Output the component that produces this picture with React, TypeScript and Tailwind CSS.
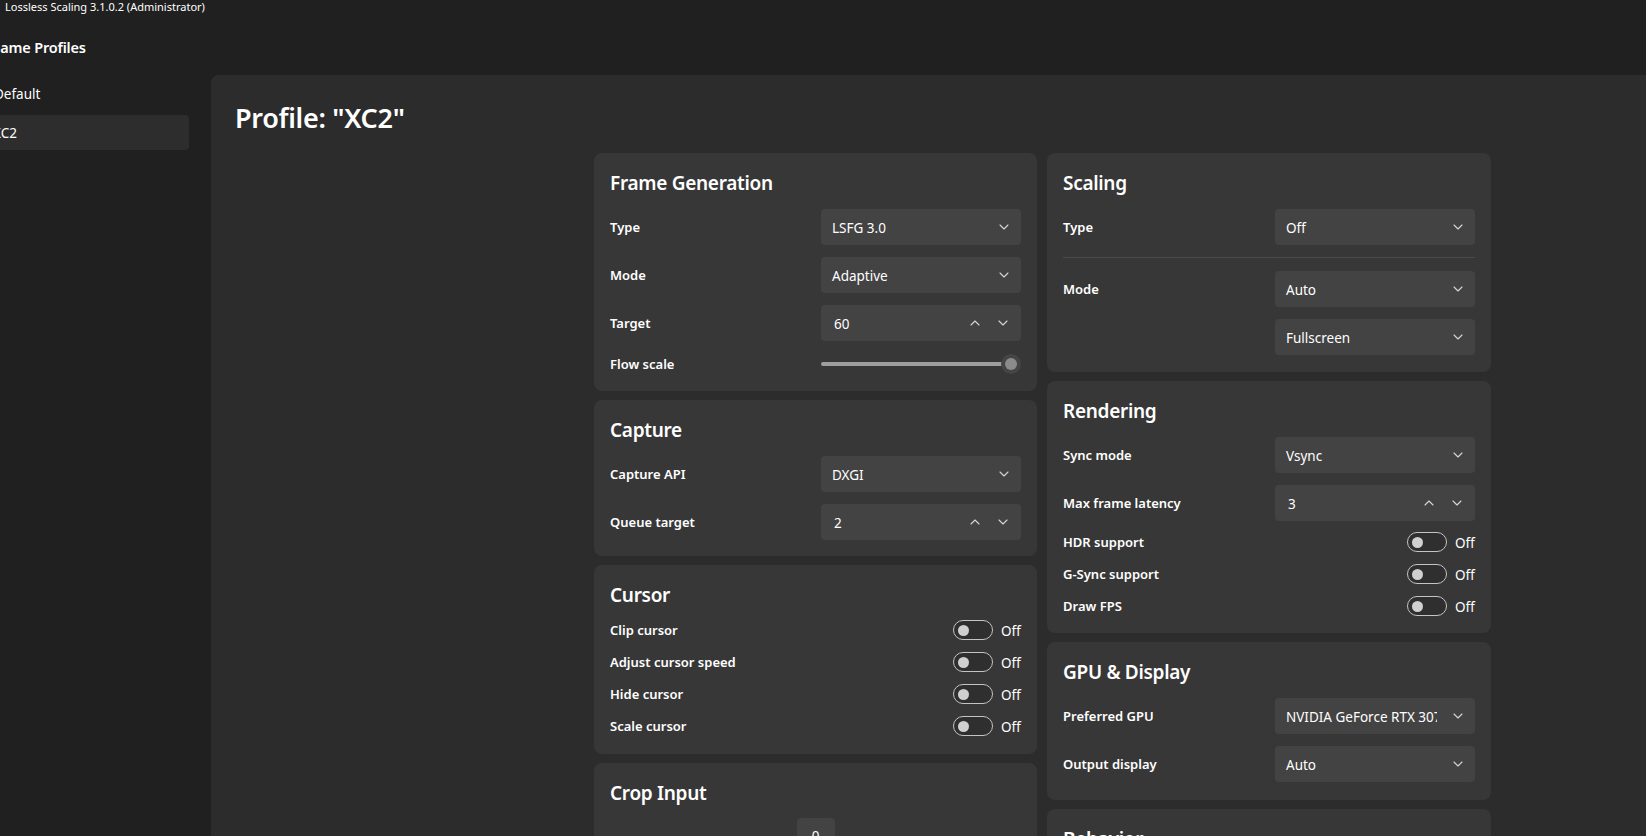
import React from "react";

function Chevron({ up = false, className = "" }: { up?: boolean; className?: string }) {
  return (
    <svg width="12" height="12" viewBox="0 0 12 12" className={className} fill="none">
      <path
        d={up ? "M2 8 L6 4 L10 8" : "M2 4 L6 8 L10 4"}
        stroke="#d6d6d6"
        strokeWidth="1.1"
        strokeLinecap="round"
        strokeLinejoin="round"
      />
    </svg>
  );
}

function Dropdown({ value, clip = false }: { value: string; clip?: boolean }) {
  return (
    <div className="w-[200px] h-[36px] rounded-[4px] bg-[#434343] flex items-center justify-between pl-[11px] pr-[11px] text-[13.5px] text-white">
      {clip ? (
        <span className="w-[151px] overflow-hidden whitespace-nowrap pt-[2px]">{value}</span>
      ) : (
        <span className="whitespace-nowrap pt-[2px]">{value}</span>
      )}
      <Chevron />
    </div>
  );
}

function NumberBox({ value }: { value: string }) {
  return (
    <div className="w-[200px] h-[36px] rounded-[4px] bg-[#434343] flex items-center justify-between pl-[13px] pr-[4px] text-[13.5px] text-white">
      <span className="pt-[2px]">{value}</span>
      <div className="flex items-center">
        <div className="w-[28px] h-[28px] flex items-center justify-center">
          <Chevron up />
        </div>
        <div className="w-[28px] h-[28px] flex items-center justify-center">
          <Chevron />
        </div>
      </div>
    </div>
  );
}

function Label({ children }: { children: React.ReactNode }) {
  return <span className="block pt-[2px] text-[13px] font-semibold text-white whitespace-nowrap">{children}</span>;
}

function Row({ label, children, className = "" }: { label?: string; children: React.ReactNode; className?: string }) {
  return (
    <div className={"flex items-center justify-between h-[36px] " + className}>
      {label ? <Label>{label}</Label> : <span />}
      {children}
    </div>
  );
}

function ToggleRow({ label }: { label: string }) {
  return (
    <div className="flex items-center justify-between h-[32px]">
      <Label>{label}</Label>
      <div className="flex items-center gap-[8px]">
        <div className="w-[40px] h-[20px] rounded-full border border-[#c4c4c4] bg-[#2f2f2f] flex items-center pl-[4px]">
          <div className="w-[11px] h-[11px] rounded-full bg-[#d0d0d0]" />
        </div>
        <span className="block pt-[2px] text-[13.5px] text-white w-[20px]">Off</span>
      </div>
    </div>
  );
}

function Card({ title, h, children }: { title: string; h: string; children?: React.ReactNode }) {
  return (
    <div className={"rounded-[8px] bg-[#373737] px-[16px] pt-[16px] shrink-0 " + h}>
      <div className="text-[19px] tracking-[-0.3px] font-semibold leading-[28px] text-white">{title}</div>
      {children}
    </div>
  );
}

export default function App() {
  return (
    <div className="w-[1646px] h-[836px] overflow-hidden bg-[#202020] flex flex-col font-['Noto_Sans',sans-serif] text-white">
      <div className="h-[14px] leading-[14px] pl-[5px] text-[11px] text-white whitespace-nowrap">
        Lossless Scaling 3.1.0.2 (Administrator)
      </div>
      <div className="flex flex-1 min-h-0">
        <aside className="w-[211px] shrink-0 flex flex-col overflow-hidden">
          <div className="mt-[21px] ml-[-10px] text-[14.5px] tracking-[-0.2px] leading-[24px] font-semibold whitespace-nowrap">
            Game Profiles
          </div>
          <div className="mt-[17px] flex flex-col gap-[4px]">
            <div className="ml-[-20px] w-[209px] h-[35px] rounded-[4px] pl-[14px] flex items-center text-[13.5px]">
              <span className="pt-[2px]">Default</span>
            </div>
            <div className="ml-[-20px] w-[209px] h-[35px] rounded-[4px] bg-[#2d2d2d] pl-[13px] flex items-center text-[13.5px]">
              <span className="pt-[2px]">XC2</span>
            </div>
          </div>
        </aside>
        <main className="flex-1 mt-[61px] rounded-tl-[8px] bg-[#2c2c2c] pl-[24px] pt-[25px] overflow-hidden">
          <h1 className="text-[27px] tracking-[-0.3px] leading-[36px] font-semibold">Profile: "XC2"</h1>
          <div className="mt-[17px] ml-[359px] flex gap-[10px] items-start">
            <div className="w-[443px] flex flex-col gap-[9px]">
              <Card title="Frame Generation" h="h-[238px]">
                <div className="mt-[12px] flex flex-col gap-[12px]">
                  <Row label="Type"><Dropdown value="LSFG 3.0" /></Row>
                  <Row label="Mode"><Dropdown value="Adaptive" /></Row>
                  <Row label="Target"><NumberBox value="60" /></Row>
                  <div className="flex items-center justify-between h-[22px]">
                    <Label>Flow scale</Label>
                    <div className="relative w-[200px] h-[20px] flex items-center">
                      <div className="w-[192px] h-[4px] rounded-full bg-[#9e9e9e]" />
                      <div className="absolute right-0 top-0 w-[20px] h-[20px] rounded-full bg-[#454545] flex items-center justify-center">
                        <div className="w-[12px] h-[12px] rounded-full bg-[#8b8b8b]" />
                      </div>
                    </div>
                  </div>
                </div>
              </Card>
              <Card title="Capture" h="h-[156px]">
                <div className="mt-[12px] flex flex-col gap-[12px]">
                  <Row label="Capture API"><Dropdown value="DXGI" /></Row>
                  <Row label="Queue target"><NumberBox value="2" /></Row>
                </div>
              </Card>
              <Card title="Cursor" h="h-[189px]">
                <div className="mt-[5px] flex flex-col">
                  <ToggleRow label="Clip cursor" />
                  <ToggleRow label="Adjust cursor speed" />
                  <ToggleRow label="Hide cursor" />
                  <ToggleRow label="Scale cursor" />
                </div>
              </Card>
              <Card title="Crop Input" h="h-[200px]">
                <div className="mt-[11px] flex justify-center">
                  <div className="w-[38px] h-[36px] rounded-[4px] bg-[#434343] flex items-center justify-center text-[13.5px]">
                    0
                  </div>
                </div>
              </Card>
            </div>
            <div className="w-[444px] flex flex-col gap-[9px]">
              <Card title="Scaling" h="h-[219px]">
                <div className="mt-[12px] flex flex-col">
                  <Row label="Type"><Dropdown value="Off" /></Row>
                  <div className="mt-[12px] h-[1px] bg-[#4b4b4b]" />
                  <Row label="Mode" className="mt-[13px]"><Dropdown value="Auto" /></Row>
                  <Row className="mt-[12px]"><Dropdown value="Fullscreen" /></Row>
                </div>
              </Card>
              <Card title="Rendering" h="h-[252px]">
                <div className="mt-[12px] flex flex-col gap-[12px]">
                  <Row label="Sync mode"><Dropdown value="Vsync" /></Row>
                  <Row label="Max frame latency"><NumberBox value="3" /></Row>
                </div>
                <div className="mt-[5px] flex flex-col">
                  <ToggleRow label="HDR support" />
                  <ToggleRow label="G-Sync support" />
                  <ToggleRow label="Draw FPS" />
                </div>
              </Card>
              <Card title="GPU & Display" h="h-[158px]">
                <div className="mt-[12px] flex flex-col gap-[12px]">
                  <Row label="Preferred GPU"><Dropdown value="NVIDIA GeForce RTX 3070" clip /></Row>
                  <Row label="Output display"><Dropdown value="Auto" /></Row>
                </div>
              </Card>
              <Card title="Behavior" h="h-[200px]" />
            </div>
          </div>
        </main>
      </div>
    </div>
  );
}
